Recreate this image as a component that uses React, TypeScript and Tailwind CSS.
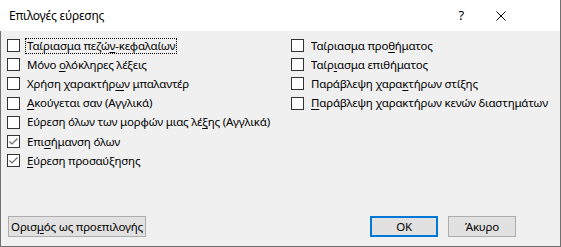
import React from "react";

type Opt = { pre: string; key: string; post: string; checked?: boolean; focus?: boolean };

const LEFT: Opt[] = [
  { pre: "Ταίριασμα πεζώ", key: "ν", post: "-κεφαλαίων", focus: true },
  { pre: "Μόνο ", key: "ο", post: "λόκληρες λέξεις" },
  { pre: "Χρήση χαρακτήρ", key: "ω", post: "ν μπαλαντέρ" },
  { pre: "", key: "Α", post: "κούγεται σαν (Αγγλικά)" },
  { pre: "Εύρεση όλων των μορφών μιας λέ", key: "ξ", post: "ης (Αγγλικά)" },
  { pre: "Επι", key: "σ", post: "ήμανση όλων", checked: true },
  { pre: "", key: "Ε", post: "ύρεση προσαύξησης", checked: true },
];

const RIGHT: Opt[] = [
  { pre: "Ταίριασμα προ", key: "θ", post: "ήματος" },
  { pre: "Ταίρ", key: "ι", post: "ασμα επιθήματος" },
  { pre: "Παράβλεψη χαρα", key: "κ", post: "τήρων στίξης" },
  { pre: "", key: "Π", post: "αράβλεψη χαρακτήρων κενών διαστημάτων" },
];

function Box({ checked }: { checked?: boolean }) {
  return (
    <span className="flex h-[13px] w-[13px] shrink-0 items-center justify-center border border-[#333333] bg-white">
      {checked && (
        <svg width="11" height="11" viewBox="0 0 11 11">
          <path d="M1.5 5.5 L4 8 L9.5 2.5" fill="none" stroke="#6b6b6b" strokeWidth="1.2" />
        </svg>
      )}
    </span>
  );
}

function Row({ o }: { o: Opt }) {
  return (
    <div className="flex h-[19.2px] items-center">
      <Box checked={o.checked} />
      <span
        className={`ml-[6px] whitespace-nowrap px-[1px] leading-[14px] ${o.focus ? "outline outline-1 outline-dotted outline-black" : ""}`}
      >
        {o.pre}
        <span className="underline underline-offset-2">{o.key}</span>
        {o.post}
      </span>
    </div>
  );
}

export default function App() {
  return (
    <div
      className="flex h-[247px] w-[561px] flex-col text-[11.5px] tracking-[-0.2px] text-black"
      style={{ fontFamily: '"Noto Sans", "Open Sans", sans-serif' }}
    >
      <div className="flex h-[31px] items-center border-r border-[#707070] bg-white pl-[9px]">
        <span className="flex-1 whitespace-nowrap text-[12px]">Επιλογές εύρεσης</span>
        <span className="mr-[32px] text-[13px]">?</span>
        <svg width="10" height="10" viewBox="0 0 10 10" className="mr-[54px]">
          <path d="M0.5 0.5 L9.5 9.5 M9.5 0.5 L0.5 9.5" stroke="#000" strokeWidth="1" />
        </svg>
      </div>
      <div className="flex flex-1 flex-col border-x border-b border-[#707070] bg-[#f0f0f0]">
        <div className="flex pl-[6px] pt-[5px]">
          <div className="w-[284px]">
            {LEFT.map((o, i) => (
              <Row key={i} o={o} />
            ))}
          </div>
          <div>
            {RIGHT.map((o, i) => (
              <Row key={i} o={o} />
            ))}
          </div>
        </div>
        <div className="mt-auto mb-[9px] flex items-center pl-[7px] pr-[44px]">
          <button className="h-[21px] w-[138px] whitespace-nowrap border border-[#adadad] bg-[#e1e1e1]">
            Ορισ<span className="underline underline-offset-2">μ</span>ός ως προεπιλογής
          </button>
          <div className="flex-1" />
          <button className="h-[21px] w-[68px] border-2 border-[#0078d7] bg-[#e1e1e1]">OK</button>
          <button className="ml-[10px] h-[21px] w-[68px] border border-[#adadad] bg-[#e1e1e1]">Άκυρο</button>
        </div>
      </div>
    </div>
  );
}
